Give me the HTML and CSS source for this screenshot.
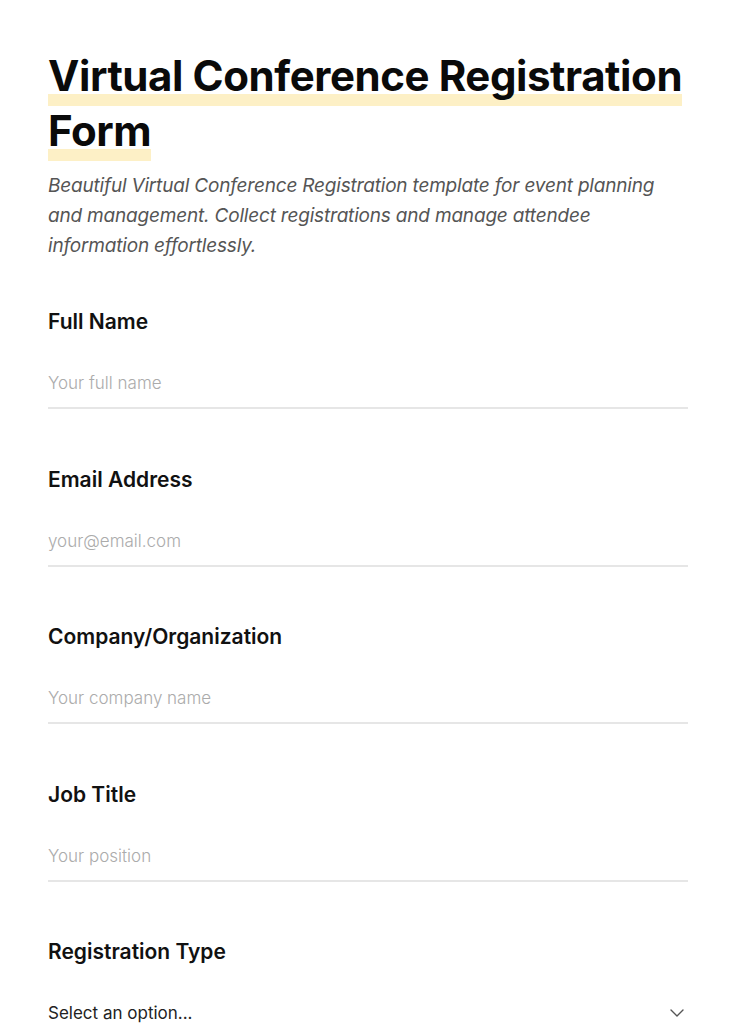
FILE: index.html
```html
<!DOCTYPE html>
<html lang="en">
  <head>
    <meta charset="UTF-8" />
    <meta name="viewport" content="width=device-width, initial-scale=1.0" />
    <title>Virtual Conference Registration Form</title>
    <link rel="stylesheet" href="styles.css">
  </head>
  <body>
    <div class="page">
      <h1 class="title"><span class="mark">Virtual Conference Registration Form</span></h1>
      <p class="intro">
        Beautiful Virtual Conference Registration template for event planning
        and management. Collect registrations and manage attendee information
        effortlessly.
      </p>

      <form class="form">
        <div class="field">
          <label class="label" for="fullName">Full Name</label>
          <input id="fullName" class="input" type="text" placeholder="Your full name" />
        </div>
        <div class="field">
          <label class="label" for="email">Email Address</label>
          <input id="email" class="input" type="email" placeholder="your@email.com" />
        </div>
        <div class="field">
          <label class="label" for="company">Company/Organization</label>
          <input id="company" class="input" type="text" placeholder="Your company name" />
        </div>
        <div class="field">
          <label class="label" for="jobTitle">Job Title</label>
          <input id="jobTitle" class="input" type="text" placeholder="Your position" />
        </div>
        <div class="field">
          <label class="label" for="regType">Registration Type</label>
          <div class="select-wrap">
            <select id="regType" class="input select">
              <option>Select an option...</option>
              <option>Attendee</option>
              <option>Speaker</option>
              <option>Sponsor</option>
            </select>
            <svg class="chevron" width="14" height="8" viewBox="0 0 14 8" fill="none">
              <path d="M1 1l6 6 6-6" stroke="#555" stroke-width="1.4" stroke-linecap="round" stroke-linejoin="round" />
            </svg>
          </div>
        </div>
      </form>
    </div>
  </body>
</html>
```

FILE: styles.css
```css
* {
  box-sizing: border-box;
}
body {
  margin: 0;
  background: #fff;
  color: #111;
  font-family: Inter, "Noto Sans", sans-serif;
}
.page {
  padding: 48px 48px 48px;
}
.title {
  margin: 0;
  font-size: 42px;
  line-height: 55px;
  font-weight: 700;
  letter-spacing: -0.01em;
  color: #0a0a0a;
}
.mark {
  padding-bottom: 5px;
  background: linear-gradient(to bottom, transparent calc(100% - 12px), #fdf0c6 calc(100% - 12px));
  -webkit-box-decoration-break: clone;
  box-decoration-break: clone;
}
.intro {
  margin: 13px 0 0;
  font-size: 19px;
  line-height: 30px;
  font-style: italic;
  letter-spacing: -0.01em;
  color: #555;
  max-width: 620px;
}
.form {
  margin-top: 47px;
}
.field {
  display: flex;
  flex-direction: column;
  margin-bottom: 56.5px;
}
.label {
  font-size: 21px;
  line-height: 28px;
  font-weight: 600;
  color: #111;
  margin-bottom: 22px;
}
.input {
  width: 100%;
  border: none;
  border-bottom: 2px solid #e6e6e6;
  padding: 12px 0 11px;
  font-family: inherit;
  font-size: 17px;
  line-height: 26px;
  color: #222;
  background: transparent;
  outline: none;
}
.input::placeholder {
  color: #ababab;
  font-weight: 300;
}
.select-wrap {
  position: relative;
}
.select {
  -webkit-appearance: none;
  appearance: none;
  height: 51px;
}
.chevron {
  position: absolute;
  right: 4px;
  top: 21px;
  pointer-events: none;
}
```
